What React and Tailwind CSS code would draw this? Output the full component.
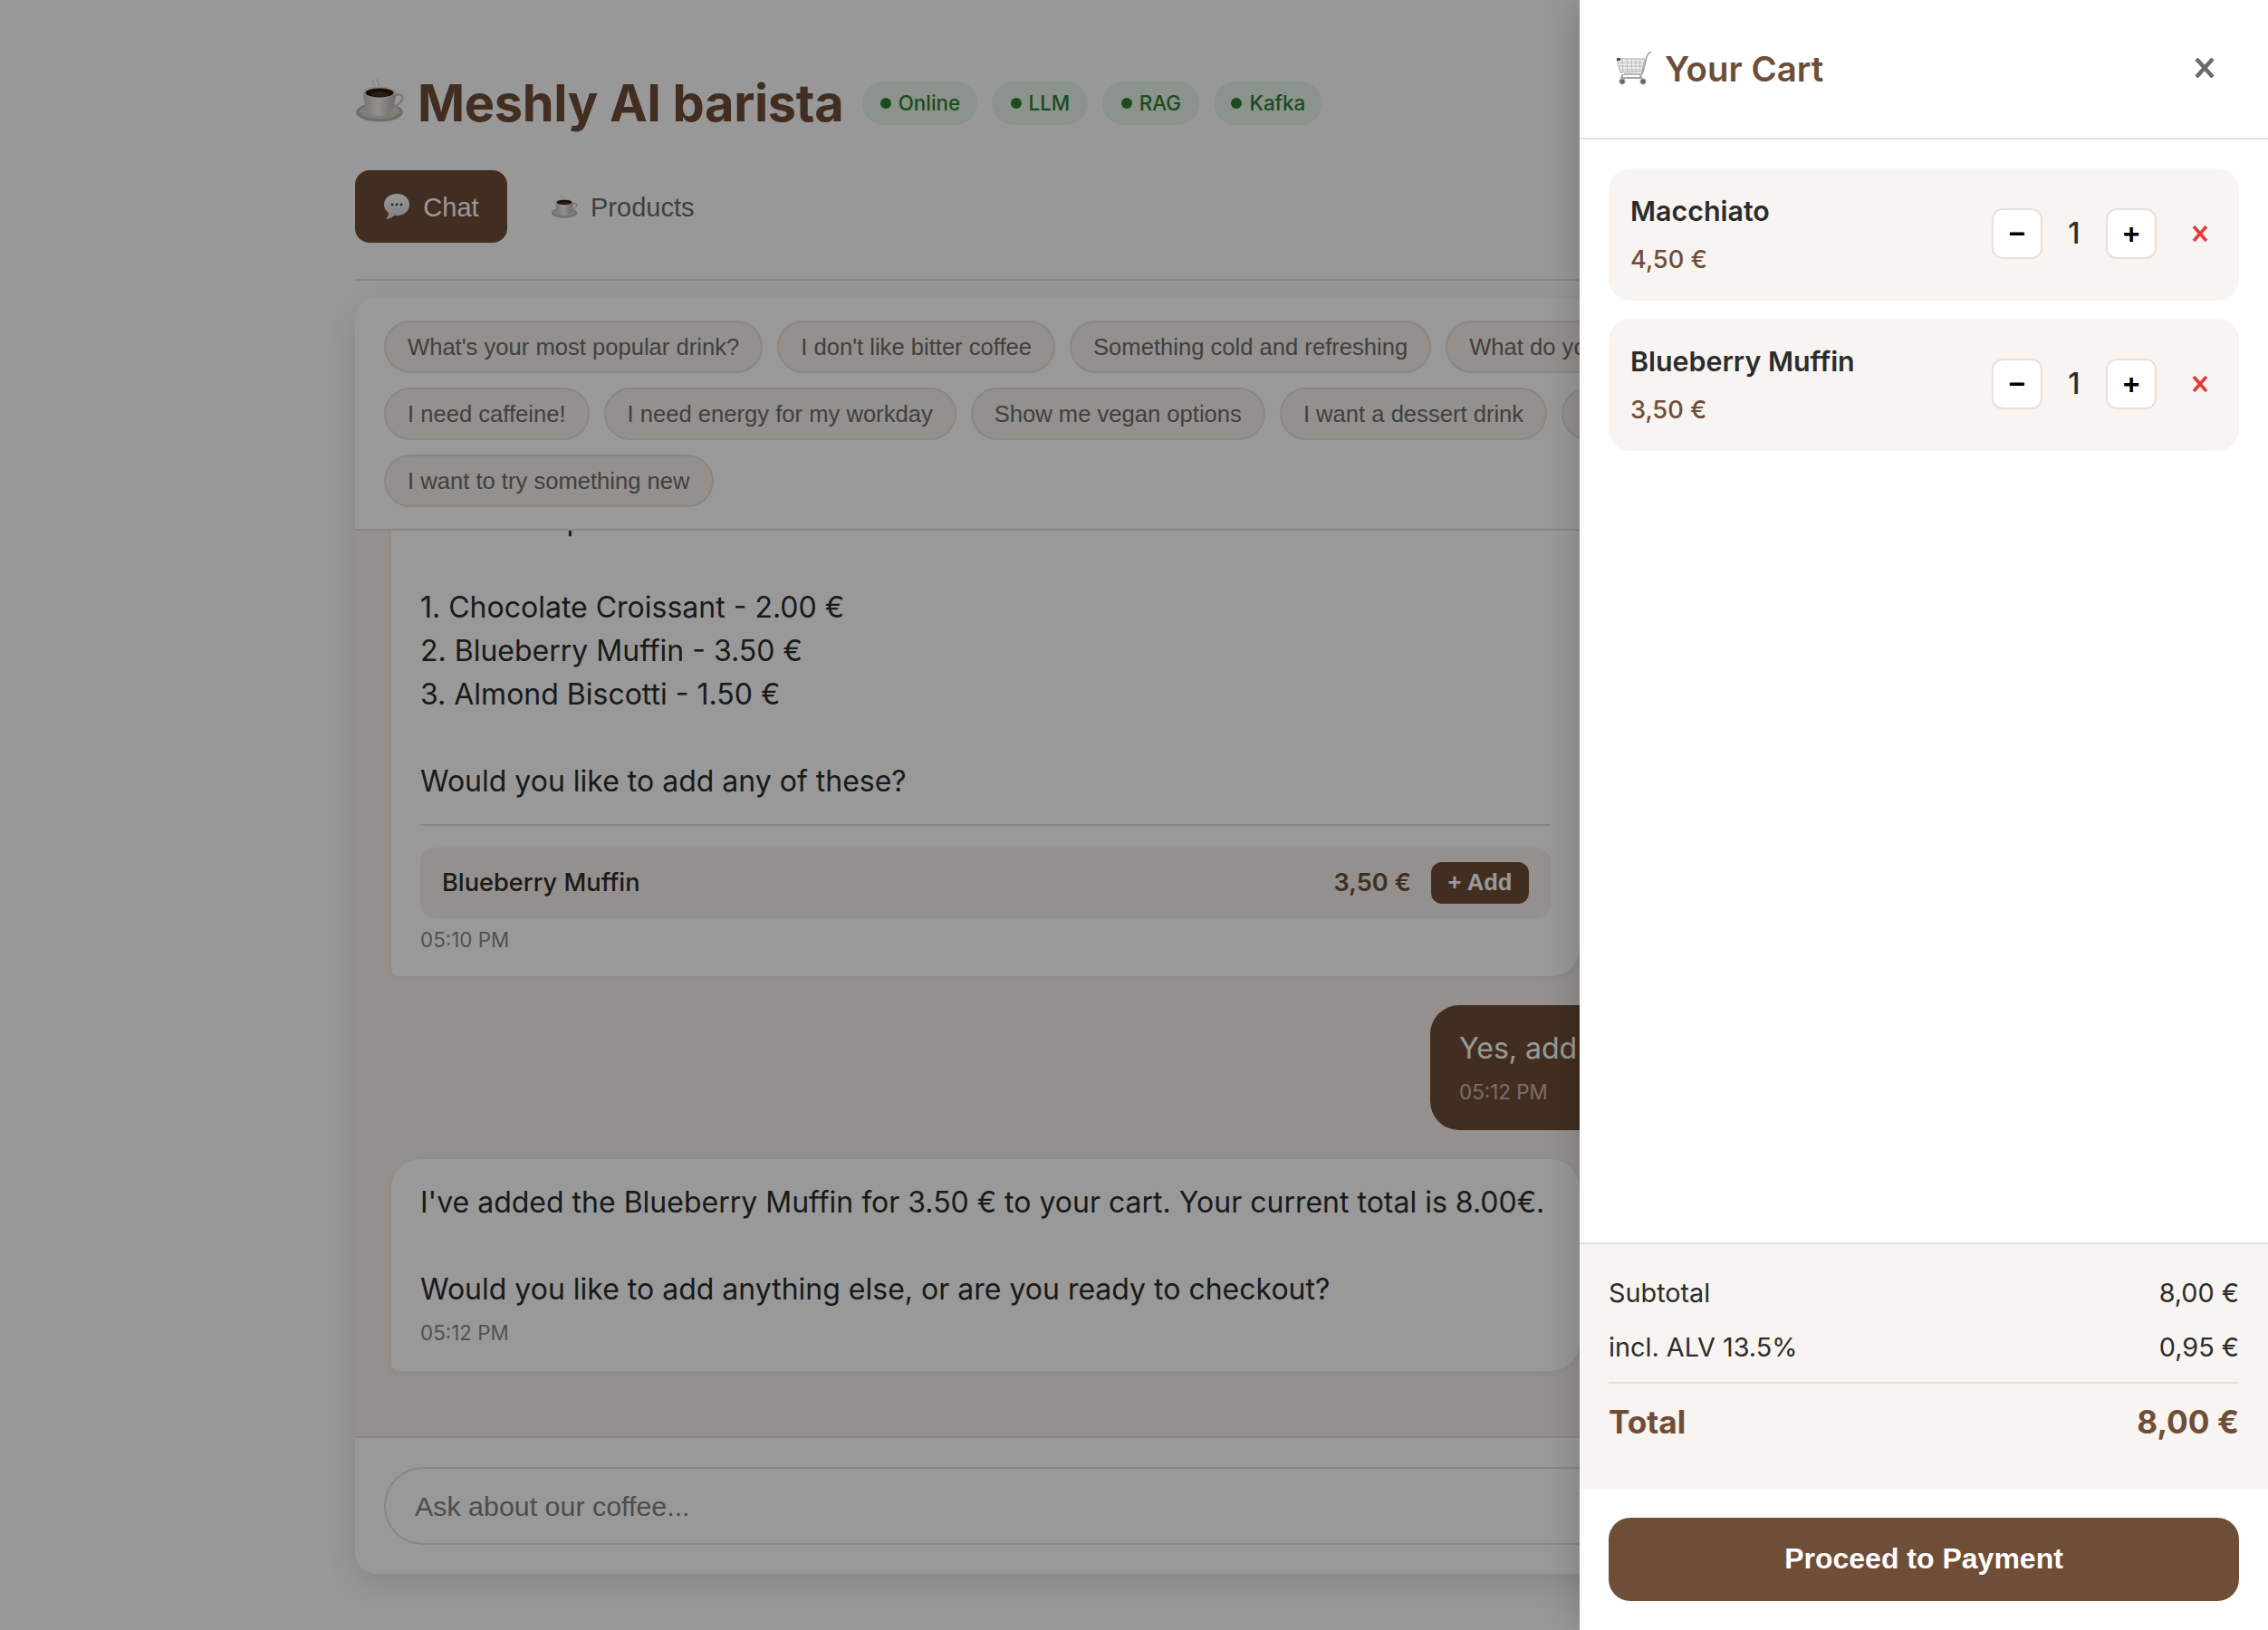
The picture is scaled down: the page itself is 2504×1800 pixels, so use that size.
const Cup = ({ className }) => (
  <svg viewBox="0 0 54 48" className={className}>
    <defs>
      <linearGradient id="cupBody" x1="0" x2="1" y1="0" y2="0">
        <stop offset="0" stopColor="#c9c6c0" />
        <stop offset="0.45" stopColor="#f4f2ee" />
        <stop offset="1" stopColor="#b5b1aa" />
      </linearGradient>
    </defs>
    <path d="M20 1c-3 3 3 4 1 7M25 0c-2 3 2 5 1 8" stroke="#e4e0da" strokeWidth="2" fill="none" opacity="0.8" />
    <ellipse cx="27" cy="37" rx="26" ry="10.5" fill="#bdb9b1" />
    <ellipse cx="27" cy="36" rx="22" ry="8" fill="#d5d2cc" />
    <path d="M43 19c7-4 11 0 9 4-2 5-8 8-13 10" stroke="#cfccc6" strokeWidth="2.4" fill="none" />
    <path d="M9 15c0 16 6 25 13 26h9c8-1 14-10 14-26z" fill="url(#cupBody)" />
    <ellipse cx="27" cy="15" rx="18" ry="6.5" fill="#e6e3dd" />
    <ellipse cx="27" cy="15.5" rx="15.5" ry="5" fill="#2a1509" />
    <ellipse cx="27" cy="17" rx="10" ry="2.6" fill="#4f2d19" />
  </svg>
);

const Speech = ({ className }) => (
  <svg viewBox="0 0 30 30" className={className}>
    <defs>
      <linearGradient id="speechFill" x1="0" x2="0" y1="0" y2="1">
        <stop offset="0" stopColor="#ffffff" />
        <stop offset="1" stopColor="#d4d4d4" />
      </linearGradient>
    </defs>
    <path d="M15 1C7 1 1 6 1 13c0 4 2 7 5 9 0 2-1 5-3 7 4 0 7-2 9-4 1 0 2 .2 3 .2 8 0 14-5 14-12.200S23 1 15 1z" fill="url(#speechFill)" />
    <circle cx="10" cy="13" r="1.400" fill="#444" />
    <circle cx="15" cy="13" r="1.400" fill="#444" />
    <circle cx="20" cy="13" r="1.400" fill="#444" />
  </svg>
);

const CartIcon = ({ className }) => (
  <svg viewBox="0 0 40 38" className={className}>
    <path d="M39 1c-3 0-4 2-5 5l-4 16c-.5 2-1 3-3 3H9" stroke="#9a9a9a" strokeWidth="1.500" fill="none" />
    <path d="M1 8l31 0-3 14-24 1z" fill="#efefef" stroke="#a8a8a8" strokeWidth="1" />
    <path d="M7 8l1 15M12 8l1 15M17 8l1 15M22 8l0 15M27 8l-1 14M2 12h29M3 16h27M4 20h25" stroke="#a9a9a9" strokeWidth="0.700" />
    <rect x="1" y="7" width="4" height="3" fill="#35506f" />
    <path d="M5 29h24M8 25l-2 4M27 25l1 4" stroke="#a2a2a2" strokeWidth="2" />
    <circle cx="7" cy="33" r="3.200" fill="#666" stroke="#bbb" />
    <circle cx="30" cy="33" r="3.200" fill="#666" stroke="#bbb" />
  </svg>
);

const Badge = ({ children, w }) => (
  <span className={`flex h-12 items-center justify-center gap-2 rounded-full bg-[#e8f5e9] text-[22.4px] font-medium text-[#2e7d32] ${w}`}>
    <span className="h-3 w-3 rounded-full bg-[#2e7d32]" />
    {children}
  </span>
);

const Chip = ({ children }) => (
  <button className="h-[58px] shrink-0 whitespace-nowrap rounded-full border-2 border-[#e8e0d9] bg-[#f5f0eb] px-6 font-['Liberation_Sans'] text-[25.6px] text-[#6b6b6b]">
    {children}
  </button>
);

const Time = ({ children, light }) => (
  <div className={`mt-[6px] text-[22.4px] leading-[36px] ${light ? 'text-[#c9b9ad]' : 'text-[#888888]'}`}>{children}</div>
);

const CartRow = ({ name, price }) => (
  <div className="flex h-[146px] items-center justify-between rounded-[24px] bg-[#f7f4f1] px-6">
    <div className="flex flex-col">
      <div className="text-[30.4px] font-semibold leading-[48px] text-[#2c2c2c]">{name}</div>
      <div className="mt-[7px] text-[27.2px] font-medium leading-[46px] text-[#6f4e37]">{price}</div>
    </div>
    <div className="-mt-[2px] flex items-center">
      <button className="flex h-14 w-14 items-center justify-center rounded-xl border-2 border-[#e8e0d9] bg-white font-['Liberation_Sans'] text-[32px] font-bold text-black">−</button>
      <span className="w-[70px] text-center text-[32px] font-medium text-[#2c2c2c]">1</span>
      <button className="flex h-14 w-14 items-center justify-center rounded-xl border-2 border-[#e8e0d9] bg-white font-['Liberation_Sans'] text-[32px] font-bold text-black">+</button>
      <button className="ml-[29px] flex h-14 w-[38px] items-center justify-center text-[#e53935]">
        <svg viewBox="0 0 18 18" className="h-[18px] w-[18px]"><path d="M2 1l14 16M16 1L2 17" stroke="currentColor" strokeWidth="3.600" /></svg>
      </button>
    </div>
  </div>
);

export default function App() {
  return (
    <div className="relative h-[1800px] w-[2504px] overflow-hidden bg-[#fdfdfd] font-['Inter',sans-serif]">
      <main className="mx-auto flex h-full w-[1720px] flex-col">
        <header className="flex h-[188px] items-start pt-[87px]">
          <Cup className="h-12 w-[54px] shrink-0" />
          <h1 className="ml-[15px] text-[56px] font-bold leading-[54px] tracking-[-0.37px] text-[#6f4e37]">Meshly AI barista</h1>
          <div className="ml-[21px] mt-[3px] flex gap-4">
            <Badge w="w-[127px]">Online</Badge>
            <Badge w="w-[106px]">LLM</Badge>
            <Badge w="w-[107px]">RAG</Badge>
            <Badge w="w-[120px]">Kafka</Badge>
          </div>
        </header>

        <nav className="flex h-[122px] gap-4 border-b-2 border-[#e8e0d9]">
          <button className="flex h-20 w-[168px] items-center justify-center gap-[14px] rounded-2xl bg-[#6f4e37] font-['Liberation_Sans'] text-[29px] text-white">
            <Speech className="h-[30px] w-[30px]" />
            <span className="pt-[3px]">Chat</span>
          </button>
          <button className="flex h-20 items-center gap-[14px] px-8 font-['Liberation_Sans'] text-[29px] text-[#6b6b6b]">
            <Cup className="h-[26px] w-[30px]" />
            <span className="pt-[3px]">Products</span>
          </button>
        </nav>

        <section className="mt-[19px] flex h-[1409px] flex-col overflow-hidden rounded-[24px] bg-white shadow-[0_12px_32px_rgba(111,78,55,0.16)]">
          <div className="flex h-[257px] shrink-0 flex-wrap content-start gap-4 border-b-2 border-[#e8e0d9] px-8 pt-[25px]">
            <Chip>What's your most popular drink?</Chip>
            <Chip>I don't like bitter coffee</Chip>
            <Chip>Something cold and refreshing</Chip>
            <Chip>What do you recommend?</Chip>
            <Chip>I need caffeine!</Chip>
            <Chip>I need energy for my workday</Chip>
            <Chip>Show me vegan options</Chip>
            <Chip>I want a dessert drink</Chip>
            <Chip>Surprise me!</Chip>
            <Chip>I want to try something new</Chip>
          </div>

          <div className="flex min-h-0 flex-1 flex-col justify-end gap-8 overflow-hidden bg-[#f5f0eb] px-10 pb-[72px]">
            <div className="w-[1312px] shrink-0 rounded-[32px] rounded-bl-lg bg-white px-8 pb-[22px] pt-6 text-[32px] leading-[48px] text-[#2c2c2c] shadow-[0_2px_8px_rgba(0,0,0,0.06)]">
              <div className="whitespace-pre-wrap">{`Our food options:\n\n1. Chocolate Croissant - 2.00 €\n2. Blueberry Muffin - 3.50 €\n3. Almond Biscotti - 1.50 €\n\nWould you like to add any of these?`}</div>
              <div className="mt-[23px] border-t-2 border-[#e8e0d9] pt-6">
                <div className="flex h-[78px] items-center justify-between rounded-2xl bg-[#f5f0eb] px-6">
                  <span className="text-[27.2px] font-medium text-[#2c2c2c]">Blueberry Muffin</span>
                  <div className="flex items-center gap-[22px]">
                    <span className="text-[27.2px] font-semibold text-[#6f4e37]">3,50 €</span>
                    <button className="h-[46px] w-[108px] rounded-xl bg-[#6f4e37] font-['Liberation_Sans'] text-[25.6px] font-bold leading-none text-white">+ Add</button>
                  </div>
                </div>
              </div>
              <Time>05:10 PM</Time>
            </div>

            <div className="w-[493px] shrink-0 self-end rounded-[32px] rounded-br-lg bg-[#6f4e37] px-8 py-6 text-[32px] leading-[48px] text-white">
              <div className="whitespace-nowrap">Yes, add a Blueberry Muffin</div>
              <Time light>05:12 PM</Time>
            </div>

            <div className="w-[1312px] shrink-0 rounded-[32px] rounded-bl-lg bg-white px-8 py-6 text-[32px] leading-[48px] text-[#2c2c2c] shadow-[0_2px_8px_rgba(0,0,0,0.06)]">
              <div className="whitespace-pre-wrap">{`I've added the Blueberry Muffin for 3.50 € to your cart. Your current total is 8.00€.\n\nWould you like to add anything else, or are you ready to checkout?`}</div>
              <Time>05:12 PM</Time>
            </div>
          </div>

          <div className="shrink-0 border-t-2 border-[#e8e0d9] bg-white p-8">
            <input
              placeholder="Ask about our coffee..."
              className="h-[86px] w-full rounded-full border-2 border-[#e8e0d9] px-[32px] font-['Liberation_Sans'] text-[30.4px] placeholder:text-[#808080]"
            />
          </div>
        </section>
      </main>

      <div className="absolute inset-0 bg-black/40" />

      <aside className="absolute inset-y-0 right-0 flex w-[760px] flex-col bg-white shadow-[-8px_0_32px_rgba(0,0,0,0.15)]">
        <div className="flex h-[154px] shrink-0 items-center justify-between border-b-2 border-[#e8e0d9] pl-10 pr-[59px]">
          <div className="flex items-center gap-[14px]">
            <CartIcon className="h-[38px] w-[40px]" />
            <h2 className="text-[38.4px] font-semibold leading-none text-[#6f4e37]">Your Cart</h2>
          </div>
          <svg viewBox="0 0 22 22" className="-mt-[2px] h-[22px] w-[22px]"><path d="M2 1l18 20M20 1L2 21" stroke="#6b6b6b" strokeWidth="4.500" /></svg>
        </div>

        <div className="flex flex-1 flex-col gap-5 p-8">
          <CartRow name="Macchiato" price="4,50 €" />
          <CartRow name="Blueberry Muffin" price="3,50 €" />
        </div>

        <div className="h-[272px] shrink-0 border-t-2 border-[#e8e0d9] bg-[#f7f4f1] px-8 pt-[30px] text-[28.8px] text-[#2c2c2c]">
          <div className="flex h-[48px] items-center justify-between"><span>Subtotal</span><span>8,00 €</span></div>
          <div className="mt-3 flex h-[48px] items-center justify-between"><span>incl. ALV 13.5%</span><span>0,95 €</span></div>
          <div className="mt-[14px] flex items-center justify-between border-t-2 border-[#e8e0d9] pt-[15px] text-[35.2px] font-bold leading-[54px] text-[#6f4e37]"><span>Total</span><span>8,00 €</span></div>
        </div>

        <div className="shrink-0 p-8">
          <button className="h-[92px] w-full rounded-[24px] bg-[#6f4e37] pb-[3px] font-['Liberation_Sans'] text-[32px] font-bold text-white">Proceed to Payment</button>
        </div>
      </aside>
    </div>
  );
}
